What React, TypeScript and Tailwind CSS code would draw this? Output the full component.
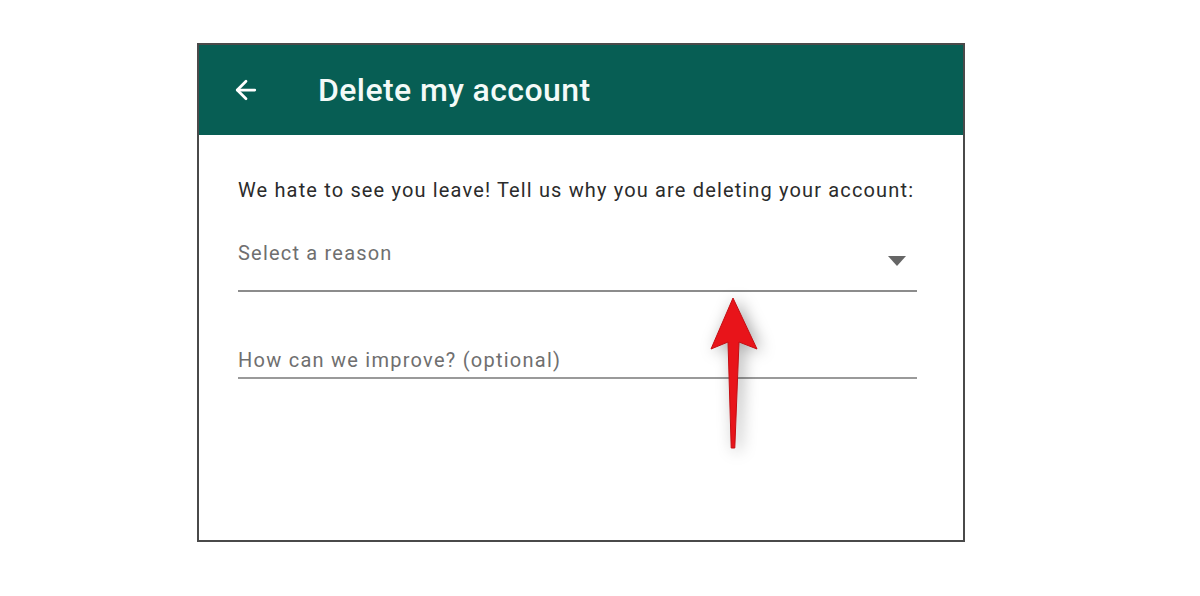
import { ArrowLeft } from 'lucide-react';

function RedArrow() {
  // annotation arrow drawn over the form
  return (
    <svg
      className="absolute left-[690px] top-[280px] drop-shadow-[4px_2px_8px_rgba(0,0,0,0.35)]"
      width="90"
      height="180"
      viewBox="0 0 90 180"
    >
      <path
        d="M43 18 L67 69 L49 62 L44.8 168 L41.2 168 L38 62 L21 69 Z"
        fill="#e8141a"
        stroke="#c40d12"
        strokeWidth="1"
        strokeLinejoin="round"
      />
    </svg>
  );
}

export default function App() {
  return (
    <div className="relative min-h-[596px] bg-white pt-[43px] pl-[197px] font-['Roboto',sans-serif]">
      <div className="flex h-[499px] w-[768px] flex-col border-2 border-[#4a4a4a] bg-white">
        <div className="flex h-[90px] items-center bg-[#075e54] pl-[32px]">
          <ArrowLeft className="h-[30px] w-[30px] text-white" strokeWidth={2.2} />
          <h1 className="ml-[57px] text-[32px] font-medium tracking-[0.4px] text-[#f4faf8]">
            Delete my account
          </h1>
        </div>

        <div className="flex flex-col pl-[39px] pr-[46px] pt-[41px]">
          <p className="whitespace-nowrap text-[20px] leading-[28px] tracking-[1.15px] text-[#2b2b2b]">
            We hate to see you leave! Tell us why you are deleting your account:
          </p>

          <div className="mt-[35px] flex items-start justify-between border-b-2 border-[#8c8c8c] pb-[23px]">
            <span className="text-[20px] leading-[28px] tracking-[1.2px] text-[#6f6f6f]">Select a reason</span>
            <span className="mr-[11px] mt-[17px] h-0 w-0 border-x-[9px] border-t-[10px] border-x-transparent border-t-[#666666]" />
          </div>

          <div className="mt-[54px] border-b-2 border-[#9a9a9a] pb-[3px]">
            <span className="text-[20px] leading-[28px] tracking-[1.25px] text-[#6f6f6f]">
              How can we improve? (optional)
            </span>
          </div>
        </div>
      </div>
      <RedArrow />
    </div>
  );
}
